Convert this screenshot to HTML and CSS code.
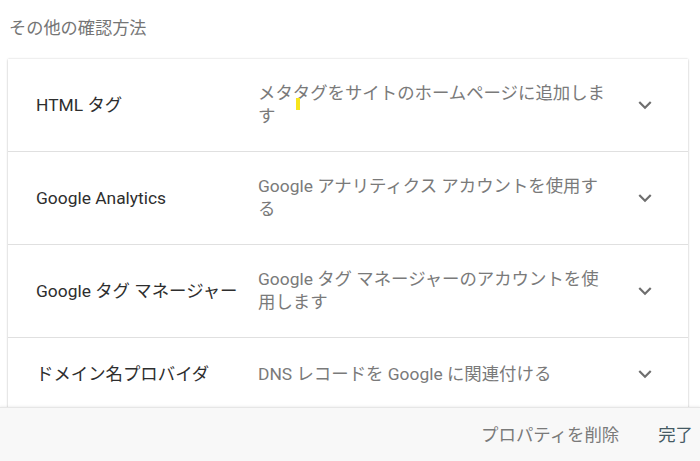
FILE: index.html
```html
<!DOCTYPE html>
<html lang="ja">
<head>
<meta charset="utf-8">
<link rel="stylesheet" href="styles.css">
</head>
<body>
<div class="page">
  <main class="content">
    <h2 class="heading">その他の確認方法</h2>
    <div class="card">
      <div class="row">
        <div class="label">HTML タグ</div>
        <div class="desc">メタタグをサイトのホームページに追加します<span class="marker"></span></div>
        <div class="chev"><svg viewBox="0 0 24 24" width="26" height="26"><path d="M16.59 8.59L12 13.17 7.41 8.59 6 10l6 6 6-6z"/></svg></div>
      </div>
      <div class="row">
        <div class="label">Google Analytics</div>
        <div class="desc">Google アナリティクス アカウントを使用する</div>
        <div class="chev"><svg viewBox="0 0 24 24" width="26" height="26"><path d="M16.59 8.59L12 13.17 7.41 8.59 6 10l6 6 6-6z"/></svg></div>
      </div>
      <div class="row">
        <div class="label">Google タグ マネージャー</div>
        <div class="desc">Google タグ マネージャーのアカウントを使用します</div>
        <div class="chev"><svg viewBox="0 0 24 24" width="26" height="26"><path d="M16.59 8.59L12 13.17 7.41 8.59 6 10l6 6 6-6z"/></svg></div>
      </div>
      <div class="row">
        <div class="label">ドメイン名プロバイダ</div>
        <div class="desc">DNS レコードを Google に関連付ける</div>
        <div class="chev"><svg viewBox="0 0 24 24" width="26" height="26"><path d="M16.59 8.59L12 13.17 7.41 8.59 6 10l6 6 6-6z"/></svg></div>
      </div>
    </div>
  </main>
  <footer class="footer">
    <button class="btn btn-secondary">プロパティを削除</button>
    <button class="btn btn-primary">完了</button>
  </footer>
</div>
</body>
</html>
```

FILE: styles.css
```css
* { box-sizing: border-box; }
html, body { margin: 0; padding: 0; background: #fff; }
body {
  font-family: "Roboto", "Noto Sans CJK JP", sans-serif;
  font-size: 17.4px;
}
.page {
  height: 461px;
  display: flex;
  flex-direction: column;
  overflow: hidden;
}
.content {
  flex: 1;
  min-height: 0;
  overflow: hidden;
}
.heading {
  margin: 0;
  padding: 16px 0 0 9px;
  height: 59px;
  font-size: 17.2px;
  font-weight: 400;
  line-height: 24px;
  color: #757575;
}
.card {
  margin: 0 12px 0 8px;
  background: #fff;
  box-shadow: 0 0 2px rgba(0,0,0,0.18), 0 1px 2px rgba(0,0,0,0.12);
}
.row {
  display: grid;
  grid-template-columns: 222px 357px 60px;
  align-items: center;
  padding: 23px 0 23px 28px;
  border-bottom: 1px solid #e0e0e0;
}
.row:last-child { border-bottom: none; }
.label {
  color: #2e2e2e;
  line-height: 23px;
}
.desc {
  position: relative;
  color: #7a7a7a;
  line-height: 23px;
}
.marker {
  position: absolute;
  left: 38px;
  top: 16px;
  width: 4px;
  height: 12px;
  background: #f7e51c;
}
.chev {
  display: flex;
  justify-content: center;
  align-items: center;
}
.chev svg { fill: #6e6e6e; display: block; }
.footer {
  flex: 0 0 54px;
  display: flex;
  justify-content: flex-end;
  align-items: center;
  background: #f8f8f8;
  border-top: 1px solid #e6e6e6;
  box-shadow: 0 -1px 2px rgba(0,0,0,0.06);
}
.btn {
  font-family: inherit;
  font-size: 17.4px;
  background: none;
  border: none;
  padding: 0;
  line-height: 24px;
  cursor: pointer;
}
.btn-secondary { color: #7a7a7a; margin-right: 39px; }
.btn-primary { color: #455a64; margin-right: 7px; }
```
